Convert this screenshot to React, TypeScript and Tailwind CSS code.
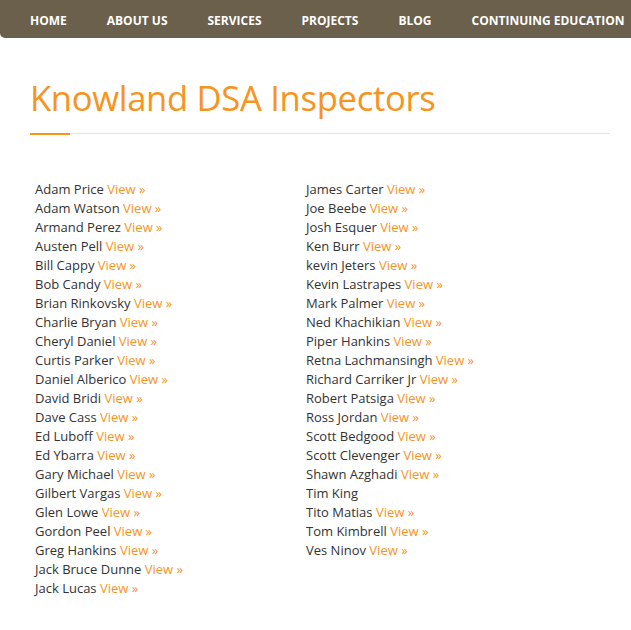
import React from "react";

const col1 = [
  "Adam Price","Adam Watson","Armand Perez","Austen Pell","Bill Cappy","Bob Candy","Brian Rinkovsky","Charlie Bryan","Cheryl Daniel","Curtis Parker","Daniel Alberico","David Bridi","Dave Cass","Ed Luboff","Ed Ybarra","Gary Michael","Gilbert Vargas","Glen Lowe","Gordon Peel","Greg Hankins","Jack Bruce Dunne","Jack Lucas",
];
const col2: [string, boolean][] = [
  ["James Carter", true],["Joe Beebe", true],["Josh Esquer", true],["Ken Burr", true],["kevin Jeters", true],["Kevin Lastrapes", true],["Mark Palmer", true],["Ned Khachikian", true],["Piper Hankins", true],["Retna Lachmansingh", true],["Richard Carriker Jr", true],["Robert Patsiga", true],["Ross Jordan", true],["Scott Bedgood", true],["Scott Clevenger", true],["Shawn Azghadi", true],["Tim King", false],["Tito Matias", true],["Tom Kimbrell", true],["Ves Ninov", true],
];

const nav = ["HOME", "ABOUT US", "SERVICES", "PROJECTS", "BLOG", "CONTINUING EDUCATION"];

function Row({ name, view }: { name: string; view: boolean }) {
  return (
    <div className="h-[19px] leading-[19px] whitespace-nowrap">
      <span className="text-[#333333]">{name}</span>
      {view && <a className="text-[#f7941d]"> View »</a>}
    </div>
  );
}

export default function App() {
  return (
    <div className="w-[631px] h-[630px] bg-white overflow-hidden" style={{ fontFamily: '"Open Sans", sans-serif' }}>
      <div className="h-[38px] bg-[#6a604b] rounded-bl-[5px] flex items-center pl-[10px] pt-[3px]">
        {nav.map((n) => (
          <span key={n} className="px-5 text-white font-bold text-[12px] whitespace-nowrap">{n}</span>
        ))}
      </div>
      <div className="pl-[30px] pr-[21px]">
        <h1 className="mt-[40px] text-[#f7941d] text-[34.6px] leading-[40px] font-normal tracking-[-0.3px]">Knowland DSA Inspectors</h1>
        <div className="mt-[15px] h-px bg-[#e5e5e5] relative">
          <div className="absolute left-0 top-[-0.5px] w-[40px] h-[2px] bg-[#f7941d]" />
        </div>
        <div className="mt-[46px] pl-[5px] flex text-[13px]">
          <div className="w-[271px]">
            {col1.map((n) => <Row key={n} name={n} view />)}
          </div>
          <div>
            {col2.map(([n, v]) => <Row key={n} name={n} view={v} />)}
          </div>
        </div>
      </div>
    </div>
  );
}
